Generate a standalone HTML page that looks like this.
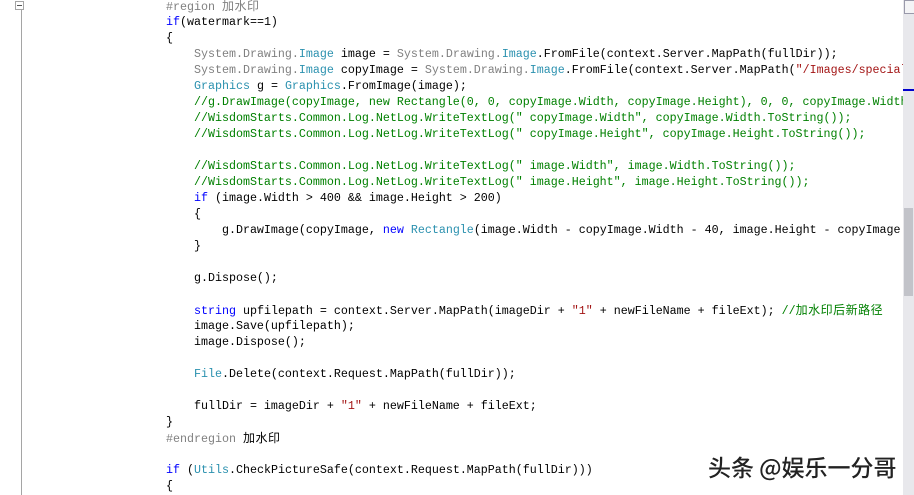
<!DOCTYPE html>
<html><head><meta charset="utf-8"><style>
html,body{margin:0;padding:0;background:#fff;width:914px;height:495px;overflow:hidden;position:relative}
.code{position:absolute;left:0;top:0;width:903px;height:495px;overflow:hidden}
.l{position:absolute;left:166px;white-space:pre;font-family:"Liberation Mono","Noto Sans CJK SC",monospace;font-size:11.67px;line-height:16px;height:16px;color:#000}
.z{font-family:"Noto Sans CJK SC",sans-serif;font-size:12px;letter-spacing:0.5px}
.k{color:#0000ff}.t{color:#2b91af}.g{color:#808080}.c{color:#008000}.s{color:#a31515}
.gut{position:absolute;left:21px;top:10px;width:1px;height:485px;background:#a5a5a5}
.box{position:absolute;left:15px;top:1px;width:7px;height:7px;border:1px solid #a5a5a5;background:#fff}
.box:after{content:"";position:absolute;left:1px;top:3px;width:5px;height:1px;background:#555}
.sb{position:absolute;left:903px;top:0;width:11px;height:495px;background:#e8e8ec}
.th{position:absolute;left:904px;top:208px;width:9px;height:88px;background:#c2c3c9}
.wm{position:absolute;left:708px;top:449px;font-family:"Noto Sans CJK SC",sans-serif;font-size:23px;font-weight:500;color:#222;text-shadow:1px 1px 1px #fff,-1px -1px 1px #fff,0 0 2px #fff;white-space:nowrap}
</style></head><body>
<div class="gut"></div><div class="box"></div>
<div class="code">
<div class="l g" style="top:-2px">#region <span class="z">加水印</span></div>
<div class="l" style="top:14px"><span class="k">if</span>(watermark==1)</div>
<div class="l" style="top:30px">{</div>
<div class="l" style="top:46px">    <span class="g">System.Drawing.</span><span class="t">Image</span> image = <span class="g">System.Drawing.</span><span class="t">Image</span>.FromFile(context.Server.MapPath(fullDir));</div>
<div class="l" style="top:62px">    <span class="g">System.Drawing.</span><span class="t">Image</span> copyImage = <span class="g">System.Drawing.</span><span class="t">Image</span>.FromFile(context.Server.MapPath(<span class="s">"/Images/special.png"</span>));</div>
<div class="l" style="top:78px">    <span class="t">Graphics</span> g = <span class="t">Graphics</span>.FromImage(image);</div>
<div class="l c" style="top:94px">    //g.DrawImage(copyImage, new Rectangle(0, 0, copyImage.Width, copyImage.Height), 0, 0, copyImage.Width</div>
<div class="l c" style="top:110px">    //WisdomStarts.Common.Log.NetLog.WriteTextLog(" copyImage.Width", copyImage.Width.ToString());</div>
<div class="l c" style="top:126px">    //WisdomStarts.Common.Log.NetLog.WriteTextLog(" copyImage.Height", copyImage.Height.ToString());</div>
<div class="l c" style="top:158px">    //WisdomStarts.Common.Log.NetLog.WriteTextLog(" image.Width", image.Width.ToString());</div>
<div class="l c" style="top:174px">    //WisdomStarts.Common.Log.NetLog.WriteTextLog(" image.Height", image.Height.ToString());</div>
<div class="l" style="top:190px">    <span class="k">if</span> (image.Width &gt; 400 &amp;&amp; image.Height &gt; 200)</div>
<div class="l" style="top:206px">    {</div>
<div class="l" style="top:222px">        g.DrawImage(copyImage, <span class="k">new</span> <span class="t">Rectangle</span>(image.Width - copyImage.Width - 40, image.Height - copyImage.Height</div>
<div class="l" style="top:238px">    }</div>
<div class="l" style="top:270px">    g.Dispose();</div>
<div class="l" style="top:302px">    <span class="k">string</span> upfilepath = context.Server.MapPath(imageDir + <span class="s">"1"</span> + newFileName + fileExt); <span class="c">//<span class="z">加水印后新路径</span></span></div>
<div class="l" style="top:318px">    image.Save(upfilepath);</div>
<div class="l" style="top:334px">    image.Dispose();</div>
<div class="l" style="top:366px">    <span class="t">File</span>.Delete(context.Request.MapPath(fullDir));</div>
<div class="l" style="top:398px">    fullDir = imageDir + <span class="s">"1"</span> + newFileName + fileExt;</div>
<div class="l" style="top:414px">}</div>
<div class="l" style="top:430px"><span class="g">#endregion</span> <span class="z">加水印</span></div>
<div class="l" style="top:462px"><span class="k">if</span> (<span class="t">Utils</span>.CheckPictureSafe(context.Request.MapPath(fullDir)))</div>
<div class="l" style="top:478px">{</div>
</div>
<div class="sb"></div><div class="th"></div>
<div style="position:absolute;left:904px;top:0;width:9px;height:12px;background:#f4f4f6;border:1px solid #99a"></div>
<div style="position:absolute;left:903px;top:89px;width:11px;height:2px;background:#0000cc"></div>
<div class="wm">头条 @娱乐一分哥</div>
</body></html>
